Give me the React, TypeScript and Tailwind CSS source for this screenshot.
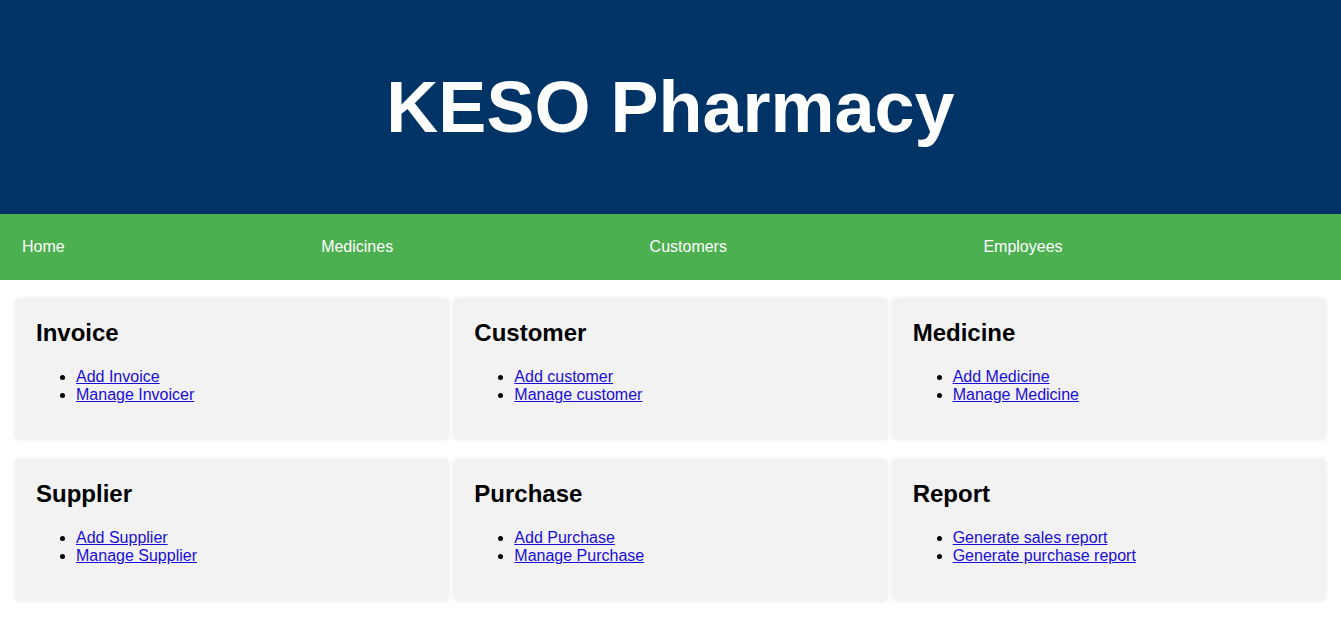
const sections = [
  { title: 'Invoice', links: ['Add Invoice', 'Manage Invoicer'] },
  { title: 'Customer', links: ['Add customer', 'Manage customer'] },
  { title: 'Medicine', links: ['Add Medicine', 'Manage Medicine'] },
  { title: 'Supplier', links: ['Add Supplier', 'Manage Supplier'] },
  { title: 'Purchase', links: ['Add Purchase', 'Manage Purchase'] },
  { title: 'Report', links: ['Generate sales report', 'Generate purchase report'] },
];

const navItems = ['Home', 'Medicines', 'Customers', 'Employees'];

export default function App() {
  return (
    <div className="min-h-screen bg-white font-['Liberation_Sans',Arial,sans-serif]">
      <header className="h-[214px] bg-[#003366] flex items-center justify-center">
        <h1 className="text-[72px] font-bold text-white leading-none">KESO Pharmacy</h1>
      </header>

      <nav className="h-[66px] bg-[#4caf50] flex items-center justify-between px-[22px] text-white text-base">
        {navItems.map(item => (
          <a key={item} href="#" className="leading-[18px]">{item}</a>
        ))}
        <span className="w-0" />
      </nav>

      <main className="grid grid-cols-3 gap-x-[4px] gap-y-[19px] px-[15px] pt-[18px]">
        {sections.map(s => (
          <div key={s.title} className="bg-[#f2f2f2] rounded-[5px] shadow-[0_0_4px_rgba(0,0,0,0.08)] px-[21px] pt-[21px] pb-[20px] h-[142px]">
            <h2 className="text-2xl font-bold text-black leading-[28px] mb-[21px]">{s.title}</h2>
            <ul className="list-disc pl-[40px] text-base leading-[18px] text-black">
              {s.links.map(l => (
                <li key={l}>
                  <a href="#" className="text-[#1a0dd8] underline">{l}</a>
                </li>
              ))}
            </ul>
          </div>
        ))}
      </main>
    </div>
  );
}
